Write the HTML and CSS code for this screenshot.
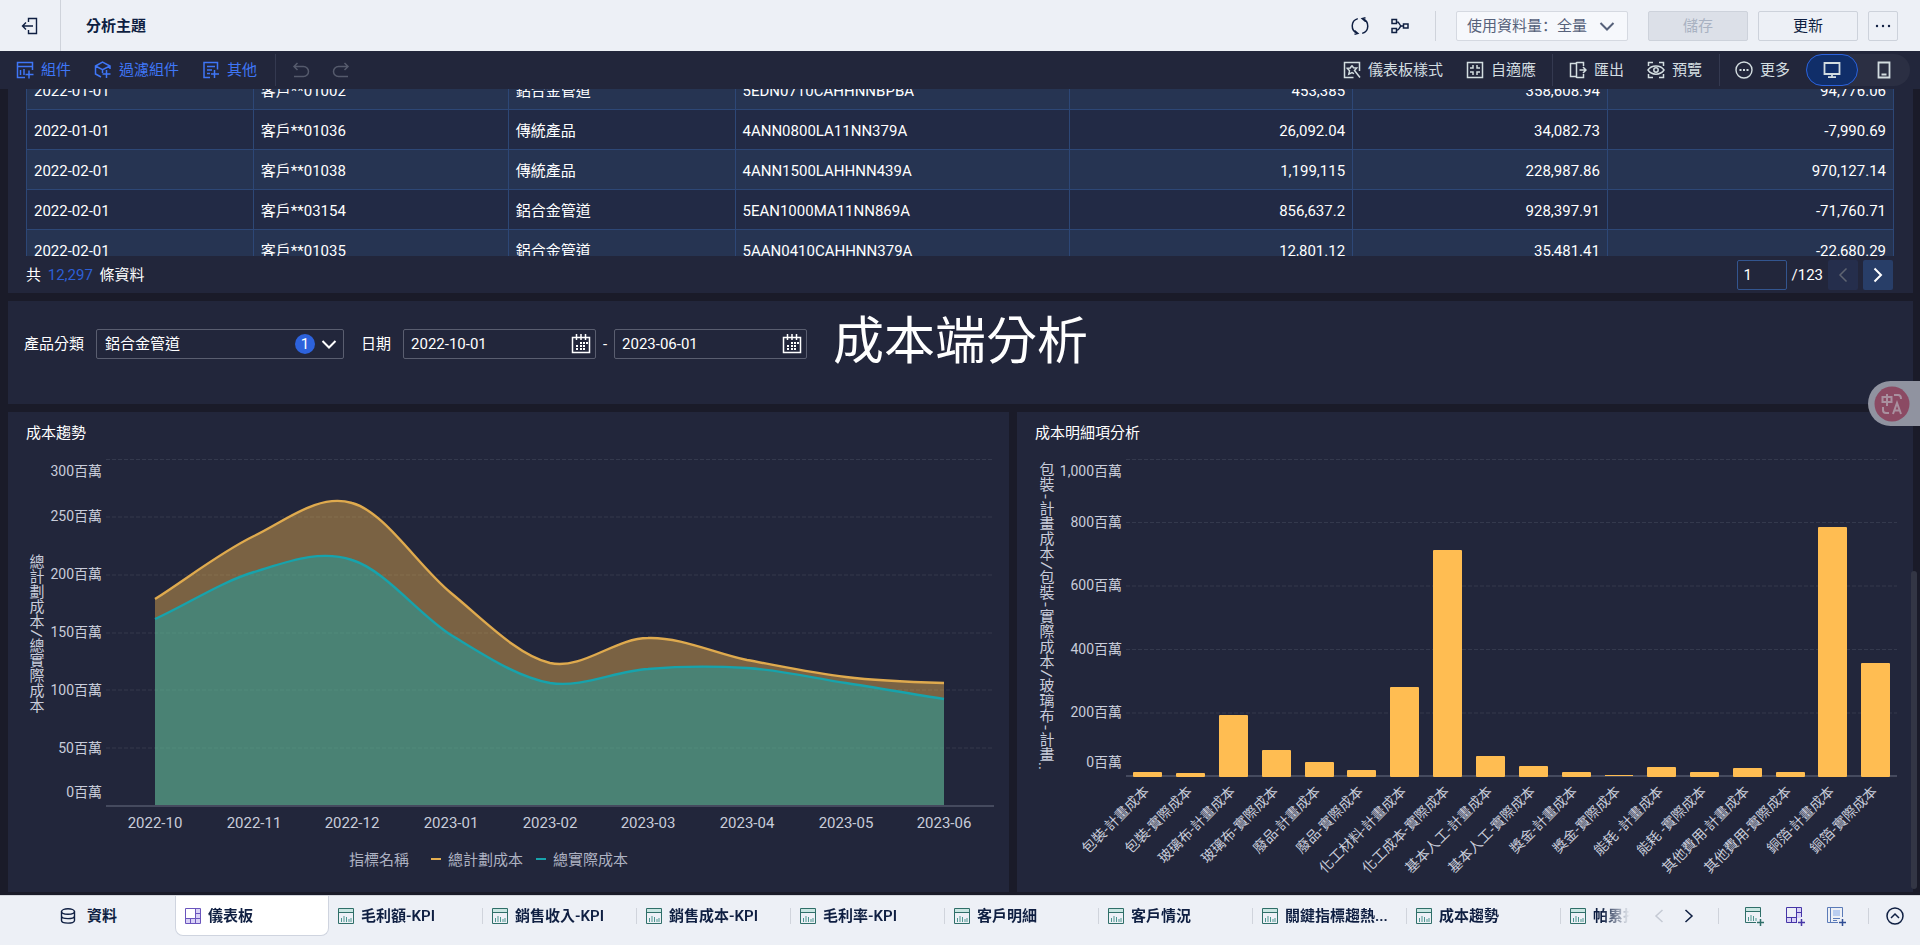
FILE: index.html
```html
<!DOCTYPE html>
<html lang="zh-Hant">
<head>
<meta charset="utf-8">
<title>分析主題</title>
<link rel="stylesheet" href="styles.css">
</head>
<body>
<svg class="sprite" aria-hidden="true">
  <symbol id="i-chart" viewBox="0 0 16 16">
    <rect x="1" y="1" width="14" height="3" fill="#c9e6e2"/>
    <path d="M.5.5h15v15H.5zM.5 4.500h15" fill="none" stroke="#2f6f69"/>
    <path d="M3.500 10v4M6 8v6M8.500 9v5M11 11v3M13 10v4" stroke="#4c9790" fill="none"/>
  </symbol>
  <symbol id="i-board" viewBox="0 0 16 16">
    <path d="M11 1h4v14H1v-4h10z" fill="#d9d2f7"/>
    <path d="M.5.5h15v15H.5zM10.500.5v15M.5 10.500h15M5.500 10.500v5M10.500 5.500h5" fill="none" stroke="#6a55bd"/>
  </symbol>
  <symbol id="i-down" viewBox="0 0 16 16"><path d="M1.500 5L8 11.500 14.500 5" fill="none" stroke="currentColor" stroke-width="2"/></symbol>
  <symbol id="i-cal" viewBox="0 0 20 20">
    <path d="M1.500 3.500h17v15h-17z" fill="none" stroke="currentColor" stroke-width="1.500"/>
    <path d="M5.500 0v6M10 0v6M14.500 0v6" stroke="currentColor" stroke-width="1.500"/>
    <path d="M9 8h2v2H9zM12 8h2v2h-2zM15 8h2v2h-2zM5 11h2v2H5zM9 11h2v2H9zM12 11h2v2h-2zM5 14h2v2H5zM9 14h2v2H9zM12 14h2v2h-2z" fill="currentColor"/>
  </symbol>
</svg>

<header class="topbar">
  <button class="icon-btn back" aria-label="返回">
    <svg width="18" height="18" viewBox="0 0 18 18" fill="none" stroke="currentColor" stroke-width="1.400"><path d="M7.500 5V1.500h8v15h-8V13M12 9H1.500M5 5.500L1.500 9 5 12.500"/></svg>
  </button>
  <h1 class="topic">分析主題</h1>
  <div class="top-actions">
    <button class="icon-btn" aria-label="重新整理">
      <svg width="18" height="18" viewBox="0 0 18 18" fill="none" stroke="currentColor" stroke-width="1.500"><path d="M6.500 16.300A7.700 7.700 0 0 1 6.800 1.600M11.500 1.700a7.700 7.700 0 0 1-.3 14.700M3.500 13.500l3.300 2.900-3.300.8M14.500 4.500l-3.300-2.900 3.300-.8"/></svg>
    </button>
    <button class="icon-btn" aria-label="血緣">
      <svg width="18" height="16" viewBox="0 0 18 16" fill="none" stroke="currentColor" stroke-width="1.500"><path d="M1 1.500h4.500v4H1zM1 10.500h4.500v4H1zM12.500 6h4.500v4h-4.500zM5.500 3.500c3.500 0 2.500 4.500 5 4.500h2M5.500 12.500c3.500 0 2.500-4.500 5-4.500"/></svg>
    </button>
    <span class="rule"></span>
    <div class="picker amount">
      <select lang="zh-Hans" aria-label="使用資料量"><option>使用資料量：全量</option></select>
      <svg class="picker-arrow" width="16" height="16"><use href="#i-down"/></svg>
    </div>
    <button class="btn" disabled>儲存</button>
    <button class="btn">更新</button>
    <button class="btn more" aria-label="更多">
      <svg width="16" height="4" viewBox="0 0 16 4" fill="currentColor"><circle cx="2" cy="2" r="1.200"/><circle cx="8" cy="2" r="1.200"/><circle cx="14" cy="2" r="1.200"/></svg>
    </button>
  </div>
</header>

<nav class="toolbar">
  <div class="tools tools-add">
    <button class="tool"><svg width="18" height="18" viewBox="0 0 18 18" fill="none" stroke="currentColor" stroke-width="1.500"><path d="M9 16.500H1.500v-15h15v7.500M1.500 5.500h15M4.500 9v5M8 8v6M13 9.500v8M9.500 13.500h8"/></svg>組件</button>
    <button class="tool"><svg width="18" height="18" viewBox="0 0 18 18" fill="none" stroke="currentColor" stroke-width="1.500"><path d="M16 8V5L8.500 1.200 1.500 5v8L7 16M1.500 5l7 3.700L16 5M8.500 9v3M12.500 9v8M8.500 13h8"/></svg>過濾組件</button>
    <button class="tool"><svg width="18" height="18" viewBox="0 0 18 18" fill="none" stroke="currentColor" stroke-width="1.500"><path d="M8 16.500H2v-15h13.500v7M5 5.500h8M5 9h5M5 12.500h3M12.500 9v8M9 13h8"/></svg>其他</button>
  </div>
  <span class="rule"></span>
  <div class="tools tools-history">
    <button class="tool" disabled aria-label="復原"><svg width="18" height="18" viewBox="0 0 18 18" fill="none" stroke="currentColor" stroke-width="1.500"><path d="M2 5.500h9.500a4.800 4.800 0 0 1 0 10H2M5.500 2L2 5.500 5.500 9"/></svg></button>
    <button class="tool" disabled aria-label="重做"><svg width="18" height="18" viewBox="0 0 18 18" fill="none" stroke="currentColor" stroke-width="1.500"><path d="M16 5.500H6.500a4.800 4.800 0 0 0 0 10H16M12.500 2L16 5.500 12.500 9"/></svg></button>
  </div>
  <div class="tools tools-view">
    <button class="tool"><svg width="18" height="18" viewBox="0 0 18 18" fill="none" stroke="currentColor" stroke-width="1.500"><path d="M16.500 10V1.500h-15v15h9M9 4.500l1.500 2.300 3.200.2-2.200 2.500 5.500 7M9 4.500L7.300 7l-3 .3 2.200 2.500-.7 3.400L9 11.500l2 1.200"/></svg>儀表板樣式</button>
    <button class="tool"><svg width="18" height="18" viewBox="0 0 18 18" fill="none" stroke="currentColor" stroke-width="1.500"><path d="M1.500 1.500h15v15h-15zM7 4v3H4M11 4v3h3M7 14v-3H4M11 14v-3h3"/></svg>自適應</button>
  </div>
  <span class="rule"></span>
  <div class="tools tools-output">
    <button class="tool"><svg width="18" height="18" viewBox="0 0 18 18" fill="none" stroke="currentColor" stroke-width="1.500"><path d="M7.500 2.500H1.500v13h6M7.500 1v16M7.500 1.500h7V5M7.500 16.500h7V13M10.500 9H17M14 6l3 3-3 3"/></svg>匯出</button>
    <button class="tool"><svg width="18" height="18" viewBox="0 0 18 18" fill="none" stroke="currentColor" stroke-width="1.500"><path d="M1.500 5V1.500H6M12 1.500h4.500V5M16.500 13v3.500H12M6 16.500H1.500V13M1 9c3.500-5.500 12.500-5.500 16 0-3.500 5.500-12.500 5.500-16 0z"/><circle cx="9" cy="9" r="2.200"/></svg>預覽</button>
  </div>
  <span class="rule"></span>
  <button class="tool tool-more"><svg width="18" height="18" viewBox="0 0 18 18" fill="none" stroke="currentColor" stroke-width="1.400"><circle cx="9" cy="9" r="8"/><path d="M4.500 9h2M8 9h2M11.500 9h2" stroke-width="2"/></svg>更多</button>
  <div class="device">
    <button class="device-btn is-on" aria-label="電腦"><svg width="18" height="18" viewBox="0 0 18 18" fill="none" stroke="currentColor" stroke-width="1.800"><path d="M1.500 2h15v11h-15zM9 13v3M5 16.200h8"/></svg></button>
    <button class="device-btn" aria-label="手機"><svg width="14" height="18" viewBox="0 0 14 18" fill="none" stroke="currentColor" stroke-width="1.800"><path d="M1.500 1.500h11v15h-11zM4.500 13.500h5"/></svg></button>
  </div>
</nav>

<main class="canvas">
  <section class="panel detail">
    <div class="detail-view">
      <table class="grid">
        <colgroup><col class="c-date"><col class="c-client"><col class="c-date"><col class="c-code"><col class="c-plan"><col class="c-client"><col></colgroup>
        <tbody>
          <tr><td>2022-01-01</td><td>客戶**01002</td><td>鋁合金管道</td><td>5EDN0710CAHHNNBPBA</td><td class="num">453,385</td><td class="num">358,608.94</td><td class="num">94,776.06</td></tr>
          <tr><td>2022-01-01</td><td>客戶**01036</td><td>傳統產品</td><td>4ANN0800LA11NN379A</td><td class="num">26,092.04</td><td class="num">34,082.73</td><td class="num">-7,990.69</td></tr>
          <tr><td>2022-02-01</td><td>客戶**01038</td><td>傳統產品</td><td>4ANN1500LAHHNN439A</td><td class="num">1,199,115</td><td class="num">228,987.86</td><td class="num">970,127.14</td></tr>
          <tr><td>2022-02-01</td><td>客戶**03154</td><td>鋁合金管道</td><td>5EAN1000MA11NN869A</td><td class="num">856,637.2</td><td class="num">928,397.91</td><td class="num">-71,760.71</td></tr>
          <tr><td>2022-02-01</td><td>客戶**01035</td><td>鋁合金管道</td><td>5AAN0410CAHHNN379A</td><td class="num">12,801.12</td><td class="num">35,481.41</td><td class="num">-22,680.29</td></tr>
        </tbody>
      </table>
    </div>
    <footer class="pager">
      <p class="total">共 <b>12,297</b> 條資料</p>
      <input class="page-no" type="text" value="1" aria-label="頁碼">
      <span class="page-all">/123</span>
      <button class="page-btn" disabled aria-label="上一頁"><svg width="10" height="16" viewBox="0 0 10 16" fill="none" stroke="currentColor" stroke-width="1.500"><path d="M8.500 1.500L2 8l6.500 6.500"/></svg></button>
      <button class="page-btn" aria-label="下一頁"><svg width="10" height="16" viewBox="0 0 10 16" fill="none" stroke="currentColor" stroke-width="2"><path d="M1.500 1.500L8 8l-6.500 6.500"/></svg></button>
    </footer>
  </section>

  <section class="panel filters">
    <label class="field-label" for="product">產品分類</label>
    <div class="picker product">
      <select id="product"><option>鋁合金管道</option></select>
      <span class="count">1</span>
      <svg class="picker-arrow" width="16" height="16"><use href="#i-down"/></svg>
    </div>
    <label class="field-label" for="from">日期</label>
    <div class="date">
      <input id="from" type="text" value="2022-10-01">
      <button class="cal" aria-label="選擇開始日期"><svg width="20" height="20"><use href="#i-cal"/></svg></button>
    </div>
    <span class="dash">-</span>
    <div class="date">
      <input type="text" value="2023-06-01" aria-label="結束日期">
      <button class="cal" aria-label="選擇結束日期"><svg width="20" height="20"><use href="#i-cal"/></svg></button>
    </div>
    <h2 class="headline">成本端分析</h2>
  </section>

  <div class="charts">
    <section class="panel">
      <h3 class="chart-title">成本趨勢</h3>
      <svg class="chart" viewBox="0 0 1001 440" role="img" aria-label="成本趨勢">
        <path class="gridline" d="M98 7.500h888M98 65h888M98 123h888M98 181h888M98 238h888M98 296h888"/>
        <path class="area-plan" d="M147,147 C180,126 213,100 246,84 C279,68 311,41 344,51 C377,60 410,114 443,141 C476,168 509,203 542,211 C575,218 607,186 640,186 C673,185 706,201 739,208 C772,214 805,221 838,225 C871,229 903,230 936,231 V354 H147Z"/>
        <path class="area-real" d="M147,167 C180,152 213,130 246,120 C279,110 311,97 344,108 C377,118 410,162 443,183 C476,203 509,225 542,231 C575,236 607,219 640,217 C673,214 706,214 739,216 C772,218 805,226 838,231 C871,236 903,242 936,247 V354 H147Z"/>
        <path class="line-plan" d="M147,147 C180,126 213,100 246,84 C279,68 311,41 344,51 C377,60 410,114 443,141 C476,168 509,203 542,211 C575,218 607,186 640,186 C673,185 706,201 739,208 C772,214 805,221 838,225 C871,229 903,230 936,231"/>
        <path class="line-real" d="M147,167 C180,152 213,130 246,120 C279,110 311,97 344,108 C377,118 410,162 443,183 C476,203 509,225 542,231 C575,236 607,219 640,217 C673,214 706,214 739,216 C772,218 805,226 838,231 C871,236 903,242 936,247"/>
        <path class="axis" d="M98 354h888"/>
        <g class="y-label">
          <text x="94" y="24">300百萬</text><text x="94" y="69">250百萬</text><text x="94" y="127">200百萬</text><text x="94" y="185">150百萬</text><text x="94" y="243">100百萬</text><text x="94" y="301">50百萬</text><text x="94" y="345">0百萬</text>
        </g>
        <g class="x-label">
          <text x="147" y="376">2022-10</text><text x="246" y="376">2022-11</text><text x="344" y="376">2022-12</text><text x="443" y="376">2023-01</text><text x="542" y="376">2023-02</text><text x="640" y="376">2023-03</text><text x="739" y="376">2023-04</text><text x="838" y="376">2023-05</text><text x="936" y="376">2023-06</text>
        </g>
        <text class="y-title" x="26" y="102">總計劃成本/總實際成本</text>
        <g class="legend">
          <text x="341" y="413">指標名稱</text>
          <path d="M423 407h10" stroke="#e4ae50" stroke-width="2"/><text x="440" y="413">總計劃成本</text>
          <path d="M528 407h10" stroke="#17a3ac" stroke-width="2"/><text x="545" y="413">總實際成本</text>
        </g>
      </svg>
    </section>

    <section class="panel">
      <h3 class="chart-title">成本明細項分析</h3>
      <svg class="chart" viewBox="0 0 896 440" role="img" aria-label="成本明細項分析">
        <path class="gridline" d="M109 7.500h771M109 70.500h771M109 134h771M109 197.500h771M109 261h771"/>
        <path class="axis" d="M109 324h771"/>
        <g class="bars">
          <rect rx="1" x="116" y="320" width="29" height="5"/><rect rx="1" x="159" y="321" width="29" height="4"/><rect rx="1" x="202" y="263" width="29" height="62"/><rect rx="1" x="245" y="298" width="29" height="27"/><rect rx="1" x="288" y="310" width="29" height="15"/><rect rx="1" x="330" y="318" width="29" height="7"/><rect rx="1" x="373" y="235" width="29" height="90"/><rect rx="1" x="416" y="98" width="29" height="227"/><rect rx="1" x="459" y="304" width="29" height="21"/><rect rx="1" x="502" y="314" width="29" height="11"/><rect rx="1" x="545" y="320" width="29" height="5"/><rect x="588" y="323" width="28" height="1"/><rect rx="1" x="630" y="315" width="29" height="10"/><rect rx="1" x="673" y="320" width="29" height="5"/><rect rx="1" x="716" y="316" width="29" height="9"/><rect rx="1" x="759" y="320" width="29" height="5"/><rect rx="1" x="801" y="75" width="29" height="250"/><rect rx="1" x="844" y="211" width="29" height="114"/>
        </g>
        <g class="y-label">
          <text x="105" y="24">1,000百萬</text><text x="105" y="75">800百萬</text><text x="105" y="138">600百萬</text><text x="105" y="202">400百萬</text><text x="105" y="265">200百萬</text><text x="105" y="315">0百萬</text>
        </g>
        <text class="y-title" x="27" y="10">包裝-計畫成本/包裝-實際成本/玻璃布-計畫<tspan class="dots">..</tspan></text>
        <g class="slant">
          <text transform="translate(133 340) rotate(-45)">包裝-計畫成本</text>
          <text transform="translate(176 340) rotate(-45)">包裝-實際成本</text>
          <text transform="translate(219 340) rotate(-45)">玻璃布-計畫成本</text>
          <text transform="translate(262 340) rotate(-45)">玻璃布-實際成本</text>
          <text transform="translate(304 340) rotate(-45)">廢品-計畫成本</text>
          <text transform="translate(347 340) rotate(-45)">廢品-實際成本</text>
          <text transform="translate(390 340) rotate(-45)">化工材料-計畫成本</text>
          <text transform="translate(433 340) rotate(-45)">化工成本-實際成本</text>
          <text transform="translate(476 340) rotate(-45)">基本人工-計畫成本</text>
          <text transform="translate(519 340) rotate(-45)">基本人工-實際成本</text>
          <text transform="translate(561 340) rotate(-45)">獎金-計畫成本</text>
          <text transform="translate(604 340) rotate(-45)">獎金-實際成本</text>
          <text transform="translate(647 340) rotate(-45)">能耗 -計畫成本</text>
          <text transform="translate(690 340) rotate(-45)">能耗 -實際成本</text>
          <text transform="translate(733 340) rotate(-45)">其他費用-計畫成本</text>
          <text transform="translate(775 340) rotate(-45)">其他費用-實際成本</text>
          <text transform="translate(818 340) rotate(-45)">銅箔-計畫成本</text>
          <text transform="translate(861 340) rotate(-45)">銅箔-實際成本</text>
        </g>
      </svg>
    </section>
  </div>
  <span class="scroll-thumb"></span>
</main>

<footer class="tabbar">
  <button class="tab data-tab"><svg width="16" height="16" viewBox="0 0 16 16" fill="none" stroke="currentColor" stroke-width="1.400"><ellipse cx="8" cy="3.500" rx="6.500" ry="2.700"/><path d="M1.500 3.500v9c0 3.500 13 3.500 13 0v-9M1.500 8c0 3.500 13 3.500 13 0"/></svg>資料</button>
  <div class="tabs">
    <button class="tab is-on"><svg width="16" height="16"><use href="#i-board"/></svg>儀表板</button>
    <button class="tab"><svg width="16" height="16"><use href="#i-chart"/></svg>毛利額-KPI</button>
    <button class="tab"><svg width="16" height="16"><use href="#i-chart"/></svg>銷售收入-KPI</button>
    <button class="tab"><svg width="16" height="16"><use href="#i-chart"/></svg>銷售成本-KPI</button>
    <button class="tab"><svg width="16" height="16"><use href="#i-chart"/></svg>毛利率-KPI</button>
    <button class="tab"><svg width="16" height="16"><use href="#i-chart"/></svg>客戶明細</button>
    <button class="tab"><svg width="16" height="16"><use href="#i-chart"/></svg>客戶情況</button>
    <button class="tab"><svg width="16" height="16"><use href="#i-chart"/></svg>關鍵指標趨熱...</button>
    <button class="tab"><svg width="16" height="16"><use href="#i-chart"/></svg>成本趨勢</button>
    <button class="tab"><svg width="16" height="16"><use href="#i-chart"/></svg>帕累托</button>
  </div>
  <div class="tab-move">
    <button class="icon-btn" disabled aria-label="向左"><svg width="10" height="14" viewBox="0 0 10 14" fill="none" stroke="currentColor" stroke-width="1.500"><path d="M8.500 1L2 7l6.500 6"/></svg></button>
    <button class="icon-btn" aria-label="向右"><svg width="10" height="14" viewBox="0 0 10 14" fill="none" stroke="currentColor" stroke-width="1.500"><path d="M1.500 1L8 7l-6.500 6"/></svg></button>
  </div>
  <span class="rule"></span>
  <div class="tab-add">
    <button class="icon-btn" aria-label="新增組件"><svg width="19" height="19" viewBox="0 0 19 19" fill="none" stroke="#2f6f69"><path d="M1 1h14v3H1z" fill="#c9e6e2" stroke="none"/><path d="M11 15.500H.5V.5h15V10M.5 4.500h15"/><path d="M15.500 12v7M12 15.500h7" stroke-width="1.500"/><path d="M3.500 10v4M6 8v6M8.500 9v5M11 11v3" stroke="#4c9790"/></svg></button>
    <button class="icon-btn" aria-label="新增儀表板"><svg width="19" height="19" viewBox="0 0 19 19" fill="none" stroke="#4636a8"><path d="M11 1h4v10H1v4h10z" fill="#d9d2f7" stroke="none"/><path d="M11 15.500H.5V.5h15V10M10.500.5v15M.5 10.500h10M5.500 10.500v5M10.500 5.500h5"/><path d="M15.500 12v7M12 15.500h7" stroke-width="1.500"/></svg></button>
    <button class="icon-btn" aria-label="新增報告"><svg width="19" height="19" viewBox="0 0 19 19" fill="none" stroke="#5b7bb8"><path d="M6 3h7v6H6z" fill="#b9cdf0" stroke="none"/><path d="M11 15.500H.5V.5h15V10M3.500.5v15M6 11.500h7M6 13.500h4"/><path d="M15.500 12v7M12 15.500h7" stroke="#2f4c94" stroke-width="1.500"/></svg></button>
  </div>
  <span class="rule"></span>
  <button class="icon-btn fold" aria-label="收起"><svg width="18" height="18" viewBox="0 0 18 18" fill="none" stroke="currentColor" stroke-width="1.500"><circle cx="9" cy="9" r="8"/><path d="M5 11l4-4 4 4"/></svg></button>
</footer>

<button class="translate" aria-label="翻譯">
  <svg width="36" height="36" viewBox="0 0 36 36" fill="none" stroke="#a9909f" stroke-width="2"><circle cx="18" cy="18" r="17.500" fill="#8b4a63" stroke="none"/><path d="M8.500 11h9v5h-9zM13 8v12M20 9h4c2 0 3 1 3 4M9 21v3c0 2 1 3 3 3h3M19 28l4-11 4 11M20.500 24.500h5"/></svg>
</button>
</body>
</html>
```

FILE: styles.css
```css
* { box-sizing: border-box; }

body {
  margin: 0;
  height: 100vh;
  display: flex;
  flex-direction: column;
  overflow: hidden;
  background: #1a1b29;
  color: #fff;
  font: 15px/20px Roboto, "Noto Sans CJK TC", sans-serif;
}

h1, h2, h3, p { margin: 0; font-weight: 400; }

button, input, select { font: inherit; color: inherit; margin: 0; }

button {
  display: flex;
  align-items: center;
  justify-content: center;
  padding: 0;
  border: 0;
  background: none;
  white-space: nowrap;
}

svg { flex: none; display: block; }

.sprite { position: absolute; width: 0; height: 0; }

.rule { width: 1px; align-self: stretch; flex: none; }

/* top bar */
.topbar {
  display: flex;
  align-items: center;
  flex: none;
  height: 51px;
  background: #edf0f6;
  color: #0f1f42;
}

.back {
  width: 61px;
  height: 51px;
  border-right: 1px solid #cfd3db;
}

.topic { padding-left: 25px; font-size: 15px; font-weight: 700; }

.top-actions {
  display: flex;
  align-items: center;
  gap: 10px;
  margin-left: auto;
  padding-right: 22px;
}

.top-actions .icon-btn { margin-right: 12px; }
.top-actions .rule { margin: 0 10px 0 4px; background: #cfd3db; }

.picker { position: relative; height: 30px; }

.picker select {
  width: 100%;
  height: 100%;
  padding: 0 8px;
  border: 1px solid #5a5e70;
  border-radius: 2px;
  background: none;
  appearance: none;
}

.picker-arrow {
  position: absolute;
  top: 7px;
  right: 7px;
  pointer-events: none;
}

.amount { width: 172px; margin-right: 10px; color: #56617a; }
.amount select {
  padding: 0 10px;
  border-color: #d5d9e1;
  background: #f6f8fc;
  font-family: Roboto, "Noto Sans CJK SC", sans-serif;
}
.amount .picker-arrow { right: 13px; }

.btn {
  width: 100px;
  height: 30px;
  border: 1px solid #cdd2db;
  border-radius: 2px;
}
.btn:disabled { background: #dce0e8; color: #a9b2c2; }
.btn.more { width: 30px; }

/* tool bar */
.toolbar {
  display: flex;
  align-items: center;
  flex: none;
  height: 38px;
  padding: 0 10px 0 16px;
  background: #22263b;
  color: #d3dde0;
}

.toolbar .rule { margin: 3px 0; background: #343950; }

.tools { display: flex; gap: 23px; }
.tool { gap: 7px; }
.tools-add { margin-right: 18px; color: #3f76f6; }
.tools-history { margin-left: 16px; gap: 22px; color: #555a6c; }
.tools-view { margin: 0 16px 0 auto; }
.tools-output { margin: 0 17px 0 16px; }
.tool-more { margin: 0 16px 0 15px; }

.device { display: flex; border-radius: 16px; background: #2b2f43; }
.device-btn { width: 52px; height: 32px; border-radius: 16px; }
.device-btn.is-on { border: 1px solid #2b62dc; background: #102e69; }

/* canvas */
.canvas {
  position: relative;
  display: flex;
  flex-direction: column;
  gap: 8px;
  flex: 1;
  min-height: 0;
  overflow: hidden;
  padding: 0 7px 3px 8px;
}

.panel { flex: none; background: #22263b; }

.detail { padding: 0 19px 0 18px; }
.detail-view { height: 167px; overflow: hidden; }

.grid {
  width: 100%;
  margin-top: -20px;
  border-collapse: collapse;
  table-layout: fixed;
  background: #222a45;
}
.grid tr:nth-child(odd) { background: #263452; }
.grid td {
  height: 40px;
  padding: 2px 7px 0;
  border: 1px solid #2d4776;
  white-space: nowrap;
}
.grid .num { text-align: right; }
.c-date { width: 12.15%; }
.c-client { width: 13.65%; }
.c-code { width: 17.93%; }
.c-plan { width: 15.15%; }

.pager { display: flex; align-items: center; height: 37px; padding-right: 1px; }
.total { margin-right: auto; }
.total b { margin: 0 3px; font-weight: 400; color: #2d5fd6; }
.page-no {
  width: 50px;
  height: 30px;
  padding: 0 6px;
  border: 1px solid #33558f;
  border-radius: 2px;
  background: none;
}
.page-all { margin: 0 5px; }
.page-btn { width: 30px; height: 30px; border-radius: 2px; background: #283e68; }
.page-btn:disabled { margin-right: 5px; background: #252e4c; color: #5f6472; }

.filters {
  display: flex;
  align-items: center;
  padding: 8px 16px 25px;
}
.field-label { margin-right: 12px; }
.product { width: 248px; margin-right: 17px; }
.count {
  position: absolute;
  top: 5px;
  right: 29px;
  width: 20px;
  border-radius: 10px;
  background: #2d62dc;
  text-align: center;
}
.date {
  display: flex;
  align-items: center;
  width: 193px;
  height: 30px;
  border: 1px solid #5a5e70;
  border-radius: 2px;
}
.date input { flex: 1; min-width: 0; padding: 0 7px; border: 0; background: none; }
.cal { margin-right: 4px; }
.dash { width: 18px; text-align: center; }
.headline { margin-left: 26px; padding-bottom: 4px; font-size: 51px; line-height: 66px; }

.charts { display: grid; grid-template-columns: 1001fr 896fr; gap: 8px; flex: none; }
.chart-title { padding: 11px 18px 9px; font-size: 15px; }
.chart { width: 100%; height: auto; font-size: 15px; fill: #c8ccda; }
.gridline { stroke: #34394d; stroke-dasharray: 4 2; }
.axis { stroke: #454a5e; stroke-width: 2; }
.line-plan, .line-real { fill: none; stroke-width: 2.4; }
.line-plan { stroke: #dfaa4e; }
.line-real { stroke: #17a3ac; }
.area-plan { fill: #ffbf50; fill-opacity: 0.4; }
.area-real { fill: #03b3bd; fill-opacity: 0.4; }
.y-label { font-size: 14px; text-anchor: end; }
.x-label { text-anchor: middle; }
.y-title {
  writing-mode: vertical-rl;
  font-family: "Liberation Mono", "Noto Sans CJK TC", monospace;
}
.y-title .dots { font-family: Roboto, sans-serif; }
.legend { fill: #aeb2c2; }
.bars { fill: #ffbd52; }
.slant { font-size: 14px; text-anchor: end; }

.scroll-thumb {
  position: absolute;
  right: 3px;
  bottom: 6px;
  width: 6px;
  height: 318px;
  border-radius: 3px;
  background: #333645;
}

/* bottom tabs */
.tabbar {
  display: flex;
  align-items: center;
  flex: none;
  height: 50px;
  padding-bottom: 9px;
  border-top: 1px solid #d3d6dd;
  background: #edf0f6;
  color: #0f1f42;
}

.tab {
  gap: 7px;
  justify-content: flex-start;
  flex: none;
  width: 154px;
  height: 40px;
  padding-left: 9px;
  font-weight: 600;
  background: linear-gradient(#d0d4dc, #d0d4dc) right / 1px 16px no-repeat;
}
.tab.is-on {
  border: 1px solid #cfd4df;
  border-top: 0;
  border-radius: 0 0 8px 8px;
  background: #fff;
}
.data-tab { width: 175px; padding-left: 60px; gap: 11px; background: none; }

.tabs {
  display: flex;
  flex: 1;
  min-width: 0;
  overflow: hidden;
  mask-image: linear-gradient(to left, transparent, #000 28px);
}

.tab-move { display: flex; gap: 20px; padding: 0 24px; }
.tab-move .icon-btn:disabled { color: #c5cad4; }
.tabbar .rule { margin: 12px 0; background: #cfd3db; }
.tab-add { display: flex; gap: 22px; padding: 0 22px 0 26px; }
.fold { margin: 0 16px 0 17px; }

.translate {
  position: fixed;
  top: 381px;
  right: 0;
  width: 52px;
  height: 45px;
  justify-content: flex-start;
  padding-left: 6px;
  border-radius: 23px 0 0 23px;
  background: #9093a0;
}
```
